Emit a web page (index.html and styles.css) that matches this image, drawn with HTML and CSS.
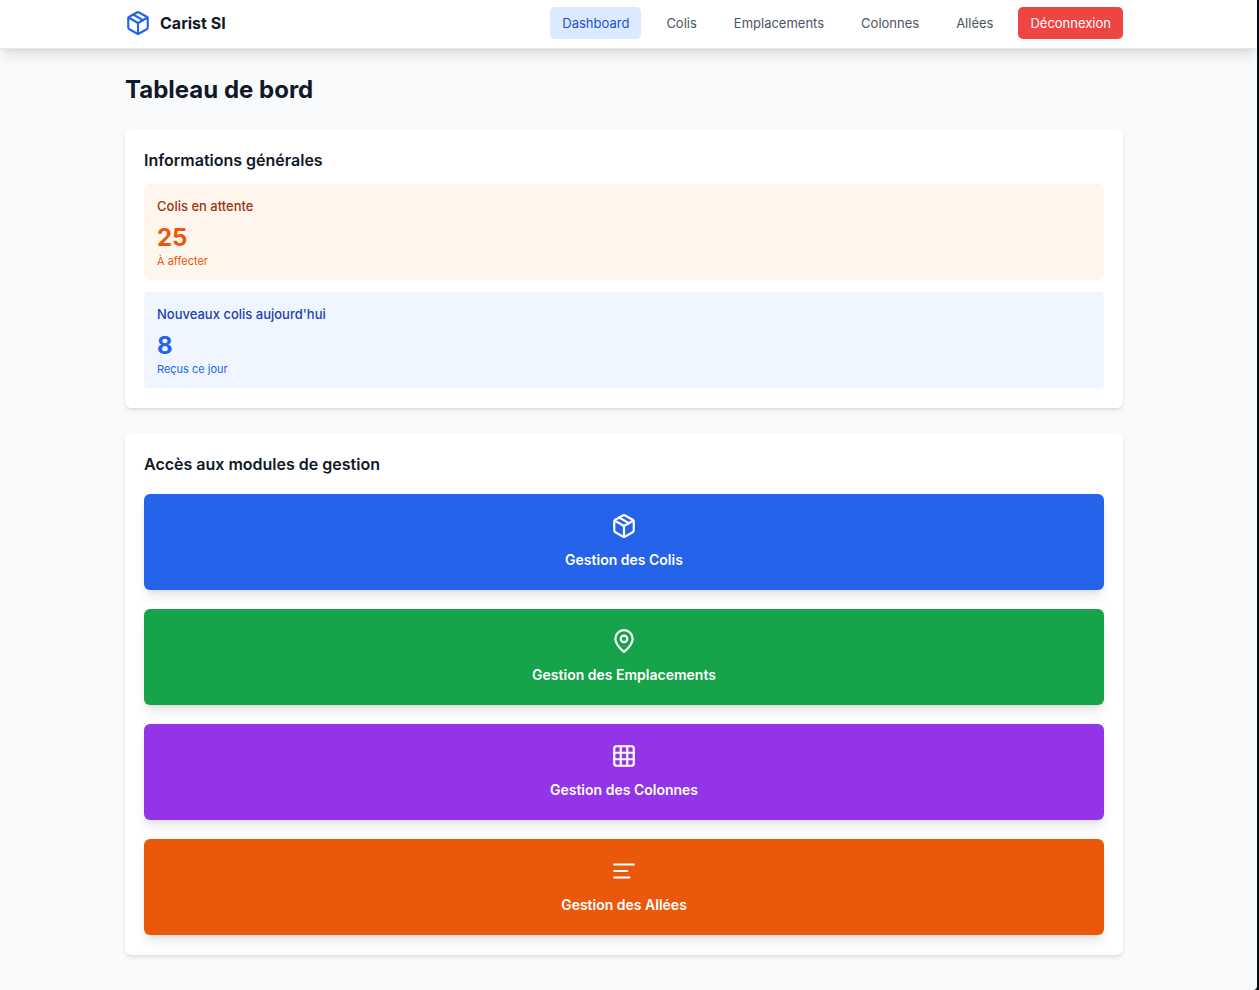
FILE: index.html
```html
<!DOCTYPE html>
<html lang="fr">
<head>
<meta charset="utf-8">
<meta name="viewport" content="width=device-width, initial-scale=1">
<title>Carist SI - Tableau de bord</title>
<link rel="stylesheet" href="styles.css">
</head>
<body>
<div class="page">
  <header class="topbar">
    <div class="container topbar-inner">
      <a class="brand" href="#">
        <svg class="icon" viewBox="0 0 24 24" aria-hidden="true"><path d="M16.5 9.4l-9-5.19"/><path d="M21 16V8a2 2 0 0 0-1-1.73l-7-4a2 2 0 0 0-2 0l-7 4A2 2 0 0 0 3 8v8a2 2 0 0 0 1 1.73l7 4a2 2 0 0 0 2 0l7-4A2 2 0 0 0 21 16z"/><path d="M3.27 6.96L12 12.01l8.73-5.05"/><path d="M12 22.08V12"/></svg>
        <span>Carist SI</span>
      </a>
      <nav class="nav">
        <a class="nav-link nav-link-active" href="#">Dashboard</a>
        <a class="nav-link" href="#">Colis</a>
        <a class="nav-link" href="#">Emplacements</a>
        <a class="nav-link" href="#">Colonnes</a>
        <a class="nav-link" href="#">Allées</a>
        <button class="nav-link logout" type="button">Déconnexion</button>
      </nav>
    </div>
  </header>
  <main class="container main">
    <h1 class="title">Tableau de bord</h1>
    <section class="card">
      <h2 class="card-title">Informations générales</h2>
      <div class="stats">
        <div class="stat stat-orange">
          <p class="stat-label">Colis en attente</p>
          <p class="stat-value">25</p>
          <p class="stat-note">À affecter</p>
        </div>
        <div class="stat stat-blue">
          <p class="stat-label">Nouveaux colis aujourd'hui</p>
          <p class="stat-value">8</p>
          <p class="stat-note">Reçus ce jour</p>
        </div>
      </div>
    </section>
    <section class="card">
      <h2 class="card-title">Accès aux modules de gestion</h2>
      <div class="modules">
        <a class="module module-blue" href="#">
          <svg class="icon" viewBox="0 0 24 24" aria-hidden="true"><path d="M16.5 9.4l-9-5.19"/><path d="M21 16V8a2 2 0 0 0-1-1.73l-7-4a2 2 0 0 0-2 0l-7 4A2 2 0 0 0 3 8v8a2 2 0 0 0 1 1.73l7 4a2 2 0 0 0 2 0l7-4A2 2 0 0 0 21 16z"/><path d="M3.27 6.96L12 12.01l8.73-5.05"/><path d="M12 22.08V12"/></svg>
          <span>Gestion des Colis</span>
        </a>
        <a class="module module-green" href="#">
          <svg class="icon" viewBox="0 0 24 24" aria-hidden="true"><path d="M20 10c0 6-8 12-8 12s-8-6-8-12a8 8 0 0 1 16 0z"/><circle cx="12" cy="10" r="3"/></svg>
          <span>Gestion des Emplacements</span>
        </a>
        <a class="module module-purple" href="#">
          <svg class="icon" viewBox="0 0 24 24" aria-hidden="true"><rect x="3" y="3" width="18" height="18" rx="2"/><path d="M3 9h18M3 15h18M9 3v18M15 3v18"/></svg>
          <span>Gestion des Colonnes</span>
        </a>
        <a class="module module-orange" href="#">
          <svg class="icon" viewBox="0 0 24 24" aria-hidden="true"><path d="M21 6H3M15 12H3M17 18H3"/></svg>
          <span>Gestion des Allées</span>
        </a>
      </div>
    </section>
  </main>
</div>
</body>
</html>
```
FILE: styles.css
```css
* {
  box-sizing: border-box;
}

html {
  background: #0b0f14;
}

body {
  margin: 0;
  font-family: Inter, "Liberation Sans", sans-serif;
  color: #111827;
}

h1, h2, p {
  margin: 0;
}

a {
  color: inherit;
  text-decoration: none;
}

.page {
  min-height: 100vh;
  margin-right: 2px;
  overflow: hidden;
  background: #f9fafb;
  border-bottom-right-radius: 4px;
}

.container {
  width: 100%;
  max-width: 1007px;
  margin: 0 auto;
  padding: 0 9px 0 0;
}

.topbar {
  background: #fff;
  border-bottom: 1px solid #e5e7eb;
  box-shadow: 0 8px 12px -2px rgba(0, 0, 0, 0.1), 0 3px 5px -3px rgba(0, 0, 0, 0.1);
  padding: 7px 0 9px;
}

.topbar-inner {
  display: flex;
  align-items: center;
  justify-content: space-between;
}

.brand {
  display: flex;
  align-items: center;
  gap: 9px;
  font-size: 16px;
  line-height: 24px;
  font-weight: 700;
}

.icon {
  width: 26px;
  height: 26px;
  fill: none;
  stroke: currentColor;
  stroke-width: 2;
  stroke-linecap: round;
  stroke-linejoin: round;
}

.brand .icon {
  color: #2563eb;
}

.nav {
  display: flex;
  gap: 13px;
}

.nav-link {
  padding: 6px 12px;
  border: 0;
  border-radius: 5px;
  background: none;
  font-family: inherit;
  font-size: 13px;
  line-height: 20px;
  color: #4b5563;
}

.nav-link-active {
  background: #dbeafe;
  color: #1d4ed8;
}

.logout {
  background: #ef4444;
  color: #fff;
}

.title {
  padding: 25px 0 23px;
  font-size: 24px;
  line-height: 32px;
  font-weight: 700;
}

.card {
  margin-bottom: 25px;
  padding: 19px 19px 20px;
  background: #fff;
  border-radius: 6px;
  box-shadow: 0 3px 5px -1px rgba(0, 0, 0, 0.1), 0 1px 3px -1px rgba(0, 0, 0, 0.1);
}

.card-title {
  font-size: 16px;
  line-height: 24px;
  font-weight: 600;
}

.stats {
  display: grid;
  gap: 12px;
  margin-top: 12px;
}

.stat {
  padding: 12px 13px;
  border-radius: 5px;
}

.stat-label {
  font-size: 13px;
  line-height: 20px;
  font-weight: 500;
}

.stat-value {
  margin-top: 6px;
  font-size: 24px;
  line-height: 32px;
  font-weight: 700;
}

.stat-note {
  font-size: 11px;
  line-height: 14px;
}

.stat-orange {
  background: #fff7ed;
  color: #ea580c;
}

.stat-orange .stat-label {
  color: #9a3412;
}

.stat-blue {
  background: #eff6ff;
  color: #2563eb;
}

.stat-blue .stat-label {
  color: #1e40af;
}

.modules {
  display: grid;
  gap: 19px;
  margin-top: 18px;
}

.module {
  display: flex;
  flex-direction: column;
  align-items: center;
  gap: 10px;
  padding: 19px;
  border-radius: 6px;
  color: #fff;
  font-size: 14px;
  line-height: 22px;
  font-weight: 600;
  box-shadow: 0 8px 12px -2px rgba(0, 0, 0, 0.1), 0 3px 5px -3px rgba(0, 0, 0, 0.1);
}

.module-blue {
  background: #2563eb;
}

.module-green {
  background: #16a34a;
}

.module-purple {
  background: #9333ea;
}

.module-orange {
  background: #ea580c;
}
```
